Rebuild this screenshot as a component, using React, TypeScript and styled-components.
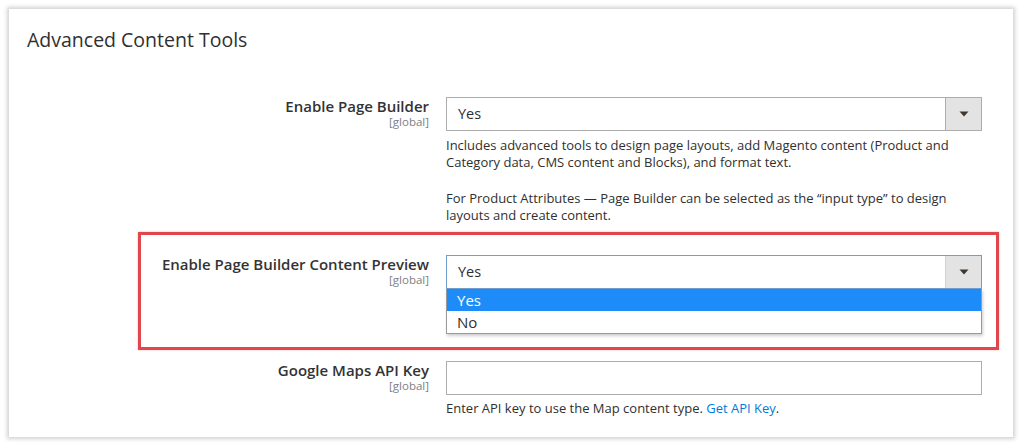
import { FunctionComponent } from "react";
import styled, { createGlobalStyle } from "styled-components";

const GlobalStyle = createGlobalStyle`
  html, body {
    margin: 0;
    padding: 0;
    background: #ffffff;
    font-family: "Open Sans", "Noto Sans", "Liberation Sans", sans-serif;
    color: #303030;
  }
`;

interface FieldProps {
  label: string;
  labelWidth: number;
  children: React.ReactNode;
}

const Field: FunctionComponent<FieldProps> = ({ label, labelWidth, children }) => (
  <Row $labelWidth={labelWidth}>
    <LabelCell>
      <Label>{label}</Label>
      <Scope>[global]</Scope>
    </LabelCell>
    <Control>{children}</Control>
  </Row>
);

const Arrow = () => (
  <svg width="10" height="6" viewBox="0 0 10 6">
    <path d="M0.5 0.5 L9.5 0.5 L5 5.5 Z" fill="#41362f" />
  </svg>
);

const App = () => {
  return (
    <>
      <GlobalStyle />
      <Page>
        <Card>
          <Title>Advanced Content Tools</Title>

          <Field label="Enable Page Builder" labelWidth={420}>
            <Select>
              <SelectValue>Yes</SelectValue>
              <SelectButton>
                <Arrow />
              </SelectButton>
            </Select>
            <Note>
              Includes advanced tools to design page layouts, add Magento content (Product and
              Category data, CMS content and Blocks), and format text.
            </Note>
            <Note $spaced>
              For Product Attributes — Page Builder can be selected as the “input type” to design
              layouts and create content.
            </Note>
          </Field>

          <Highlight>
            <Field label="Enable Page Builder Content Preview" labelWidth={288}>
              <Select $focused>
                <SelectValue>Yes</SelectValue>
                <SelectButton $focused>
                  <Arrow />
                </SelectButton>
              </Select>
              <OptionList>
                <Option $selected>Yes</Option>
                <Option>No</Option>
              </OptionList>
            </Field>
          </Highlight>

          <Field label="Google Maps API Key" labelWidth={420}>
            <TextInput />
            <Note $tight>
              Enter API key to use the Map content type. <Link>Get API Key</Link>.
            </Note>
          </Field>
        </Card>
      </Page>
    </>
  );
};

const Page = styled.div`
  width: 1024px;
  height: 448px;
  padding: 9px 11px 11px 9px;
  box-sizing: border-box;
`;

const Card = styled.div`
  width: 1004px;
  height: 428px;
  background: #ffffff;
  box-shadow: 0 0 4px 2px rgba(0, 0, 0, 0.18);
  display: flex;
  flex-direction: column;
  box-sizing: border-box;
`;

const Title = styled.h2`
  margin: 0;
  padding: 19px 0 0 18px;
  font-size: 19.5px;
  line-height: 24px;
  font-weight: 400;
  color: #303030;
  margin-bottom: 45px;
`;

const Row = styled.div<{ $labelWidth: number }>`
  display: grid;
  grid-template-columns: ${(p) => p.$labelWidth}px 536px;
  column-gap: 17px;
  align-items: start;
`;

const LabelCell = styled.div`
  display: flex;
  flex-direction: column;
  align-items: flex-end;
  text-align: right;
`;

const Label = styled.span`
  font-size: 15px;
  line-height: 18px;
  font-weight: 600;
  color: #333333;
`;

const Scope = styled.span`
  font-size: 11.5px;
  line-height: 13px;
  color: #808080;
`;

const Control = styled.div`
  display: flex;
  flex-direction: column;
`;

const Select = styled.div<{ $focused?: boolean }>`
  height: 34px;
  box-sizing: border-box;
  border: 1px solid ${(p) => (p.$focused ? "#6f9fcf" : "#adadad")};
  background: #ffffff;
  display: flex;
  align-items: stretch;
`;

const SelectValue = styled.div`
  flex: 1;
  padding-left: 11px;
  font-size: 14.5px;
  line-height: 32px;
  color: #303030;
`;

const SelectButton = styled.div<{ $focused?: boolean }>`
  width: 35px;
  background: #e3e3e3;
  border-left: 1px solid ${(p) => (p.$focused ? "#d0d0d0" : "#adadad")};
  display: flex;
  align-items: center;
  justify-content: center;
`;

const Note = styled.p<{ $spaced?: boolean; $tight?: boolean }>`
  margin: ${(p) => (p.$spaced ? "19px" : p.$tight ? "5px" : "6px")} 0 0;
  font-size: 13px;
  line-height: 17px;
  color: #303030;
`;

const Link = styled.span`
  color: #007bdb;
`;

const Highlight = styled.div`
  margin: 8px 0 11px 129px;
  width: 861px;
  box-sizing: border-box;
  border: 3px solid #e0474c;
  padding: 20px 0 13px;
  box-shadow: 0 0 2px rgba(224, 71, 76, 0.4);
`;

const OptionList = styled.div`
  border: 1px solid #9a9a9a;
  border-top: none;
  background: #ffffff;
  box-shadow: 1px 2px 3px rgba(0, 0, 0, 0.2);
`;

const Option = styled.div<{ $selected?: boolean }>`
  height: 22px;
  padding-left: 10px;
  font-size: 15px;
  line-height: 22px;
  color: ${(p) => (p.$selected ? "#ffffff" : "#303030")};
  background: ${(p) => (p.$selected ? "#1e8cf8" : "transparent")};
`;

const TextInput = styled.div`
  height: 34px;
  box-sizing: border-box;
  border: 1px solid #adadad;
  background: #ffffff;
`;

export default App;
